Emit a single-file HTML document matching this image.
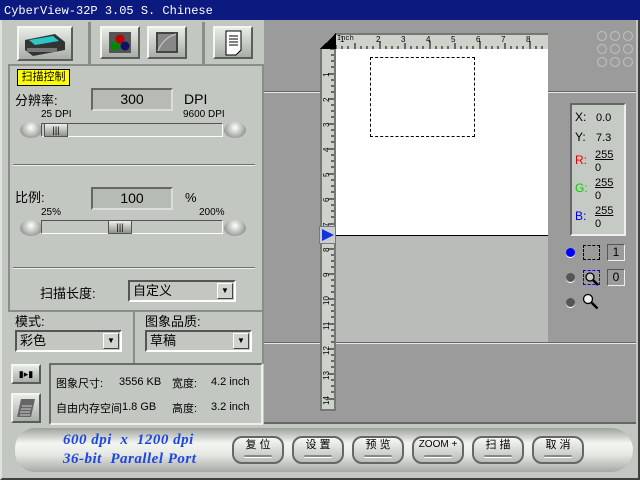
<!DOCTYPE html>
<html><head><meta charset="utf-8"><style>
*{margin:0;padding:0;box-sizing:border-box}
body{width:640px;height:480px;overflow:hidden;background:#c3c7c1;font-family:"Liberation Sans","Noto Sans CJK SC",sans-serif;font-size:12px;color:#000;position:relative}
.a{position:absolute}
.rais{border:2px solid;border-color:#f4f6f2 #5a5e58 #5a5e58 #f4f6f2}
.btn{background:linear-gradient(#e8ece6,#a9ada7);}
.cn{font-family:"Liberation Sans","Noto Sans CJK SC",sans-serif}
.knob{width:22px;height:16px;border-radius:50%;background:radial-gradient(circle at 50% 35%,#fff,#b0b4ae 55%,#707470);}
.track{height:14px;background:#c2c7c0;border:1px solid;border-color:#555 #fff #fff #555}
.thumb{height:14px;background:linear-gradient(#eef0ec,#8e928c);border:1px solid #555;text-align:center;font-size:9px;line-height:12px}
.sel{background:#c2c7c0;border:2px solid;border-color:#555 #fff #fff #555;height:22px;font-size:13px;padding-left:3px;line-height:18px}
.dd{position:absolute;right:1px;top:1px;width:16px;height:16px;background:#d0d4ce;border:1px solid;border-color:#fff #444 #444 #fff;font-size:8px;text-align:center;line-height:14px}
.pb{position:absolute;top:436px;height:28px;border-radius:10px;border:2px solid #666;background:linear-gradient(#f6f8f4,#b8bcb6);font-size:11px;text-align:center;line-height:14px}
.pb i{position:absolute;left:10px;right:10px;bottom:4px;height:3px;border-radius:2px;background:#888;border-bottom:1px solid #fff}
</style></head><body>
<div class="a" style="left:0;top:0;width:640px;height:20px;background:#0c1a80;color:#fff;font-family:'Liberation Mono',monospace;font-size:12px;line-height:22px;padding-left:4px">CyberView-32P 3.05 S. Chinese</div>
<div class="a" style="left:0;top:20px;width:640px;height:460px;border:2px solid;border-color:#e0e0e0 #404040 #404040 #e0e0e0;border-top:none"></div>
<div class="a" style="left:88px;top:22px;width:3px;height:42px;background:#8a8e88"></div>
<div class="a" style="left:202px;top:22px;width:3px;height:42px;background:#8a8e88"></div>
<div class="a rais btn" style="left:17px;top:26px;width:56px;height:35px">
<svg width="52" height="31"><polygon points="6,12 36,6 46,14 46,22 14,28 6,22" fill="#333"/><polygon points="10,12 34,8 40,13 16,17" fill="#2cc6c6"/><rect x="8" y="20" width="30" height="4" fill="#777"/></svg></div>
<div class="a rais btn" style="left:100px;top:26px;width:40px;height:33px"><svg width="36" height="29"><rect x="7" y="4" width="22" height="21" fill="#555"/><circle cx="18" cy="11" r="4.5" fill="#b00"/><circle cx="13" cy="18" r="4.5" fill="#080"/><circle cx="23" cy="18" r="4.5" fill="#116"/></svg></div>
<div class="a rais btn" style="left:147px;top:26px;width:40px;height:33px"><svg width="36" height="29"><rect x="7" y="4" width="22" height="21" fill="#444"/><rect x="9" y="6" width="18" height="17" fill="#888"/><path d="M9 23 Q14 10 27 6" stroke="#ccc" fill="none"/></svg></div>
<div class="a rais btn" style="left:213px;top:26px;width:40px;height:33px"><svg width="36" height="29"><path d="M11 3h15v19l-5 5h-10z" fill="#fff" stroke="#000"/><path d="M14 8h9M14 11h9M14 14h9M14 17h9" stroke="#000"/></svg></div>
<div class="a" style="left:8px;top:64px;width:256px;height:248px;border:2px solid #8a8e88;background:#c3c7c1"></div>
<div class="a cn" style="left:17px;top:69px;width:53px;height:17px;background:#ff0;border:1px solid #000;font-size:11px;text-align:center;line-height:15px">扫描控制</div>
<div class="a cn" style="left:15px;top:90px;font-size:13px">分辨率:</div>
<div class="a" style="left:91px;top:88px;width:82px;height:23px;background:#b6bbb4;border:2px solid;border-color:#666 #ddd #ddd #666;text-align:center;font-size:14px;line-height:19px">300</div>
<div class="a" style="left:184px;top:91px;font-size:14px">DPI</div>
<div class="a" style="left:41px;top:109px;font-size:10px">25 DPI</div>
<div class="a" style="left:183px;top:109px;font-size:10px">9600 DPI</div>
<div class="a knob" style="left:20px;top:122px"></div>
<div class="a track" style="left:41px;top:123px;width:182px"></div>
<div class="a thumb" style="left:44px;top:123px;width:24px">|||</div>
<div class="a knob" style="left:224px;top:122px"></div>
<div class="a" style="left:13px;top:164px;width:242px;height:2px;background:#6e726c;border-bottom:1px solid #eee"></div>
<div class="a cn" style="left:15px;top:187px;font-size:13px">比例:</div>
<div class="a" style="left:91px;top:187px;width:82px;height:23px;background:#b6bbb4;border:2px solid;border-color:#666 #ddd #ddd #666;text-align:center;font-size:14px;line-height:19px">100</div>
<div class="a" style="left:185px;top:190px;font-size:13px">%</div>
<div class="a" style="left:41px;top:207px;font-size:10px">25%</div>
<div class="a" style="left:199px;top:207px;font-size:10px">200%</div>
<div class="a knob" style="left:20px;top:220px"></div>
<div class="a track" style="left:41px;top:220px;width:182px"></div>
<div class="a thumb" style="left:108px;top:220px;width:24px">|||</div>
<div class="a knob" style="left:224px;top:220px"></div>
<div class="a" style="left:13px;top:267px;width:242px;height:2px;background:#6e726c;border-bottom:1px solid #eee"></div>
<div class="a cn" style="left:40px;top:283px;font-size:13px">扫描长度:</div>
<div class="a sel cn" style="left:128px;top:280px;width:108px">自定义<div class="dd">▼</div></div>
<div class="a" style="left:8px;top:310px;width:127px;height:54px;border-right:2px solid #8a8e88"></div>
<div class="a cn" style="left:15px;top:311px;font-size:13px">模式:</div>
<div class="a sel cn" style="left:15px;top:330px;width:107px">彩色<div class="dd">▼</div></div>
<div class="a cn" style="left:145px;top:311px;font-size:13px">图象品质:</div>
<div class="a sel cn" style="left:145px;top:330px;width:107px">草稿<div class="dd">▼</div></div>
<div class="a" style="left:134px;top:310px;width:130px;height:54px;border-right:2px solid #8a8e88"></div>
<div class="a rais btn" style="left:11px;top:364px;width:30px;height:20px;text-align:center;font-size:9px;line-height:16px">▮▸▮</div>
<div class="a rais btn" style="left:11px;top:393px;width:30px;height:30px"><svg width="26" height="26"><path d="M8 4h14l-4 18h-14z" fill="#666"/><path d="M9 11h10M8 14h10M7 17h10M7 20h10" stroke="#ccc"/></svg></div>
<div class="a" style="left:49px;top:363px;width:214px;height:62px;border:2px solid;border-color:#6a6e68 #eee #eee #6a6e68;background:#c3c7c1"></div>
<div class="a cn" style="left:56px;top:375px;font-size:11px">图象尺寸:</div>
<div class="a" style="left:119px;top:376px;font-size:11px">3556 KB</div>
<div class="a cn" style="left:172px;top:375px;font-size:11px">宽度:</div>
<div class="a" style="left:211px;top:376px;font-size:11px">4.2 inch</div>
<div class="a cn" style="left:56px;top:400px;font-size:11px">自由内存空间</div>
<div class="a" style="left:122px;top:401px;font-size:11px">1.8 GB</div>
<div class="a cn" style="left:172px;top:400px;font-size:11px">高度:</div>
<div class="a" style="left:211px;top:401px;font-size:11px">3.2 inch</div>
<div class="a" style="left:264px;top:20px;width:372px;height:404px;background:#9b9b9b"></div>
<div class="a" style="left:264px;top:91px;width:372px;height:2px;background:#e8e8e8;border-top:1px solid #666"></div>
<div class="a" style="left:264px;top:342px;width:372px;height:2px;background:#e8e8e8;border-top:1px solid #666"></div>
<div class="a" style="left:264px;top:422px;width:372px;height:2px;background:#666"></div>
<svg class="a" style="left:596px;top:30px" width="40" height="40"><g fill="none" stroke="#bbb" stroke-width="1.2"><circle cx="6" cy="6" r="4.5"/><circle cx="19" cy="6" r="4.5"/><circle cx="32" cy="6" r="4.5"/><circle cx="6" cy="19" r="4.5"/><circle cx="19" cy="19" r="4.5"/><circle cx="32" cy="19" r="4.5"/><circle cx="6" cy="32" r="4.5"/><circle cx="19" cy="32" r="4.5"/><circle cx="32" cy="32" r="4.5"/></g></svg>
<div class="a" style="left:320px;top:33px;width:16px;height:16px;background:linear-gradient(135deg,#9b9b9b 50%,#000 50%)"></div>
<div class="a" style="left:336px;top:33px;width:212px;height:16px;background:#cdd2cb;border-top:2px solid #777;font-size:7px;line-height:8px;font-family:'Liberation Mono',monospace;overflow:hidden">
<span style="position:absolute;left:1px;top:0">Inch</span>
<svg class="a" style="left:0;top:0" width="212" height="14"><g stroke="#000"><path d="M0 14V10M6 14v-3M12 14v-3M19 14V8M25 14v-3M31 14v-3M37 14v-3M44 14V6M50 14v-3M56 14v-3M62 14v-3M69 14V8M75 14v-3M81 14v-3M87 14v-3M94 14V6M100 14v-3M106 14v-3M112 14v-3M119 14V8M125 14v-3M131 14v-3M137 14v-3M144 14V6M150 14v-3M156 14v-3M162 14v-3M169 14V8M175 14v-3M181 14v-3M187 14v-3M194 14V6M200 14v-3M206 14v-3"/></g><g font-size="8" font-family="Liberation Sans"><text x="4" y="7">1</text><text x="40" y="7">2</text><text x="65" y="7">3</text><text x="90" y="7">4</text><text x="115" y="7">5</text><text x="140" y="7">6</text><text x="165" y="7">7</text><text x="190" y="7">8</text></g></svg></div>
<div class="a" style="left:320px;top:49px;width:16px;height:362px;background:#cdd2cb;border-left:2px solid #777;border-right:2px solid #777;border-bottom:2px solid #777">
<svg width="12" height="360"><g stroke="#000"><path d="M12 0H8M12 6H9M12 12H9M12 18H9M12 25H6M12 31H9M12 37H9M12 43H9M12 50H6M12 56H9M12 62H9M12 68H9M12 75H6M12 81H9M12 87H9M12 93H9M12 100H6M12 106H9M12 112H9M12 118H9M12 125H6M12 131H9M12 137H9M12 143H9M12 150H6M12 156H9M12 162H9M12 168H9M12 175H6M12 181H9M12 187H9M12 193H9M12 200H6M12 206H9M12 212H9M12 218H9M12 225H6M12 231H9M12 237H9M12 243H9M12 250H6M12 256H9M12 262H9M12 268H9M12 275H6M12 281H9M12 287H9M12 293H9M12 300H6M12 306H9M12 312H9M12 318H9M12 325H6M12 331H9M12 337H9M12 343H9M12 350H6"/></g><g font-size="8" font-family="Liberation Sans">
<text transform="translate(7,28) rotate(-90)">1</text><text transform="translate(7,53) rotate(-90)">2</text><text transform="translate(7,78) rotate(-90)">3</text><text transform="translate(7,103) rotate(-90)">4</text><text transform="translate(7,128) rotate(-90)">5</text><text transform="translate(7,153) rotate(-90)">6</text><text transform="translate(7,178) rotate(-90)">7</text><text transform="translate(7,203) rotate(-90)">8</text><text transform="translate(7,228) rotate(-90)">9</text><text transform="translate(7,256) rotate(-90)">10</text><text transform="translate(7,281) rotate(-90)">11</text><text transform="translate(7,306) rotate(-90)">12</text><text transform="translate(7,331) rotate(-90)">13</text><text transform="translate(7,356) rotate(-90)">14</text></g></svg></div>
<div class="a" style="left:319px;top:226px;width:17px;height:18px;background:#ccc;border:1px solid #777"><svg width="15" height="16"><polygon points="2,2 14,8 2,14" fill="#1133dd"/></svg></div>
<div class="a" style="left:336px;top:49px;width:212px;height:187px;background:#fff;border-bottom:1px solid #000"></div>
<div class="a" style="left:336px;top:236px;width:212px;height:106px;background:#b9bcb9"></div>
<div class="a" style="left:370px;top:57px;width:105px;height:80px;border:1px dashed #000"></div>
<div class="a" style="left:570px;top:103px;width:56px;height:133px;background:#c6cac4;border:2px solid;border-color:#666 #eee #eee #666;font-size:11px">
<div class="a" style="left:3px;top:5px;font-size:12px">X:</div><div class="a" style="left:24px;top:7px">0.0</div>
<div class="a" style="left:3px;top:25px;font-size:12px">Y:</div><div class="a" style="left:24px;top:27px">7.3</div>
<div class="a" style="left:3px;top:48px;font-size:12px;color:#e00">R:</div><div class="a" style="left:23px;top:44px;text-decoration:underline">255</div><div class="a" style="left:23px;top:57px">0</div>
<div class="a" style="left:3px;top:76px;font-size:12px;color:#0c0">G:</div><div class="a" style="left:23px;top:72px;text-decoration:underline">255</div><div class="a" style="left:23px;top:85px">0</div>
<div class="a" style="left:3px;top:104px;font-size:12px;color:#00e">B:</div><div class="a" style="left:23px;top:100px;text-decoration:underline">255</div><div class="a" style="left:23px;top:113px">0</div>
</div>
<div class="a" style="left:566px;top:248px;width:9px;height:9px;border-radius:50%;background:#00f;box-shadow:0 1px 0 #fff"></div>
<div class="a" style="left:583px;top:245px;width:17px;height:15px;border:1px dashed #000"></div>
<div class="a" style="left:607px;top:244px;width:18px;height:17px;border:1px solid;border-color:#555 #eee #eee #555;text-align:center;font-size:12px;line-height:15px">1</div>
<div class="a" style="left:566px;top:273px;width:9px;height:9px;border-radius:50%;background:#555;box-shadow:0 1px 0 #fff"></div>
<div class="a" style="left:583px;top:270px;width:17px;height:15px;border:1px dashed #00f"></div>
<div class="a" style="left:607px;top:269px;width:18px;height:17px;border:1px solid;border-color:#555 #eee #eee #555;text-align:center;font-size:12px;line-height:15px">0</div>
<div class="a" style="left:566px;top:298px;width:9px;height:9px;border-radius:50%;background:#555;box-shadow:0 1px 0 #fff"></div>
<svg class="a" style="left:584px;top:271px" width="16" height="16"><circle cx="6" cy="6" r="4" fill="#ccc" stroke="#000" stroke-width="1.3"/><path d="M9 9l5 5" stroke="#000" stroke-width="2.5"/></svg>
<svg class="a" style="left:582px;top:293px" width="18" height="18"><circle cx="6" cy="6" r="4.5" fill="#eee" stroke="#000" stroke-width="1.3"/><path d="M9.5 9.5l6 6" stroke="#000" stroke-width="2.5"/></svg>
<div class="a" style="left:15px;top:428px;width:618px;height:44px;border-radius:22px 24px 24px 22px;background:linear-gradient(#9ea29c,#f4f6f2 35%,#e6e8e4 60%,#a6aaa4);"></div>
<div class="a" style="left:63px;top:431px;font-family:'Liberation Serif',serif;font-style:italic;font-weight:bold;color:#1d46e0;font-size:15px;line-height:19px;letter-spacing:0.5px">600 dpi&nbsp; x&nbsp; 1200 dpi<br>36-bit&nbsp; Parallel Port</div>
<div class="pb cn" style="left:232px;width:52px">复 位<i></i></div>
<div class="pb cn" style="left:292px;width:52px">设 置<i></i></div>
<div class="pb cn" style="left:352px;width:52px">预 览<i></i></div>
<div class="pb" style="left:412px;width:52px;font-size:10px">ZOOM +<i></i></div>
<div class="pb cn" style="left:472px;width:52px">扫 描<i></i></div>
<div class="pb cn" style="left:532px;width:52px">取 消<i></i></div>
</body></html>
